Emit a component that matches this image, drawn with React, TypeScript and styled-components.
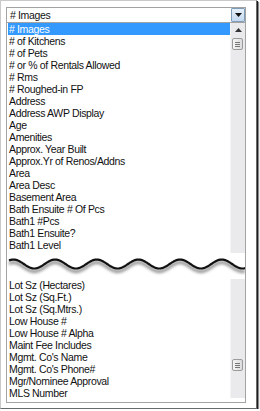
import React from 'react';
import styled, { createGlobalStyle } from 'styled-components';

const Global = createGlobalStyle`
  html, body { margin: 0; padding: 0; background: #fff; }
  body { font-family: "Liberation Sans", Arial, sans-serif; }
`;

const Frame = styled.div`
  box-sizing: border-box;
  width: 257px;
  height: 409px;
  border: 1px solid #c9c9c9;
  border-right-color: #6a6a6a;
  border-bottom-color: #6a6a6a;
  box-shadow: 1px 1px 0 #1c1c1c, 2px 2px 1px rgba(0, 0, 0, 0.45);
  background: #fff;
  padding: 6px 10px 0 5px;
  display: flex;
  flex-direction: column;
`;

const Combo = styled.div`
  box-sizing: border-box;
  height: 16px;
  border: 1px solid #a3a3a3;
  display: flex;
  align-items: center;
  font-size: 10.5px;
  letter-spacing: -0.35px;
  color: #111;
`;

const ComboText = styled.div`
  flex: 1;
  padding-left: 3px;
  line-height: 14px;
`;

const DropButton = styled.div`
  box-sizing: border-box;
  width: 14px;
  height: 14px;
  border: 1px solid #7f9db9;
  border-radius: 1px;
  background: linear-gradient(#e6f0fa, #c3d9f0);
  display: flex;
  align-items: center;
  justify-content: center;
`;

const ListBox = styled.div`
  box-sizing: border-box;
  height: 380px;
  border: 1px solid #a3a3a3;
  border-top: none;
  display: flex;
  flex-direction: column;
`;

const Part = styled.div<{ $h: number }>`
  height: ${(p) => p.$h}px;
  display: flex;
  flex-direction: row;
`;

const Rows = styled.div`
  flex: 1;
  display: flex;
  flex-direction: column;
  padding-left: 1px;
`;

const Row = styled.div<{ $sel?: boolean }>`
  height: 12px;
  line-height: 12px;
  font-size: 10.5px;
  letter-spacing: -0.35px;
  padding-left: 1px;
  white-space: nowrap;
  color: ${(p) => (p.$sel ? '#fff' : '#111')};
  background: ${(p) => (p.$sel ? '#3399ff' : 'transparent')};
`;

const Track = styled.div<{ $bottomGap: number }>`
  position: relative;
  width: 14px;
  background: #eaeaed;
  border-left: 1px solid #f4f4f6;
  margin-bottom: ${(p) => p.$bottomGap}px;
`;

const ArrowUp = styled.div`
  height: 14px;
  display: flex;
  align-items: center;
  justify-content: center;
`;

const Thumb = styled.div`
  position: absolute;
  left: 1px;
  width: 11px;
  height: 12px;
  box-sizing: border-box;
  border: 1px solid #9a9a9a;
  border-radius: 2px;
  background: linear-gradient(90deg, #f6f6f6, #dcdcdc);
  display: flex;
  flex-direction: column;
  align-items: center;
  justify-content: center;
  gap: 1px;
`;

const Grip = styled.div`
  width: 5px;
  height: 1px;
  background: #777;
`;

const Tear = styled.div`
  height: 26px;
  display: flex;
`;

const top = [
  '# Images',
  '# of Kitchens',
  '# of Pets',
  '# or % of Rentals Allowed',
  '# Rms',
  '# Roughed-in FP',
  'Address',
  'Address AWP Display',
  'Age',
  'Amenities',
  'Approx. Year Built',
  'Approx.Yr of Renos/Addns',
  'Area',
  'Area Desc',
  'Basement Area',
  'Bath Ensuite # Of Pcs',
  'Bath1 #Pcs',
  'Bath1 Ensuite?',
  'Bath1 Level',
];

const bottom = [
  'Lot Sz (Hectares)',
  'Lot Sz (Sq.Ft.)',
  'Lot Sz (Sq.Mtrs.)',
  'Low House #',
  'Low House # Alpha',
  'Maint Fee Includes',
  "Mgmt. Co's Name",
  "Mgmt. Co's Phone#",
  'Mgr/Nominee Approval',
  'MLS Number',
];

function wavePath(width: number, mid: number, amp: number, period: number, phase: number) {
  let d = '';
  for (let x = 0; x <= width; x += 1) {
    const y = mid - amp * Math.sin(((x - phase) / period) * Math.PI * 2);
    d += (x === 0 ? 'M' : 'L') + x + ' ' + y.toFixed(2) + ' ';
  }
  return d;
}

const Grips = () => (
  <>
    <Grip />
    <Grip />
    <Grip />
  </>
);

export default function App() {
  const d = wavePath(238, 11, 4.5, 42, 36);
  const ds = wavePath(238, 14, 4.5, 42, 36);
  return (
    <>
      <Global />
      <Frame>
        <Combo>
          <ComboText># Images</ComboText>
          <DropButton>
            <svg width="7" height="4" viewBox="0 0 7 4">
              <path d="M0 0 L7 0 L3.5 4 Z" fill="#111" />
            </svg>
          </DropButton>
        </Combo>
        <ListBox>
          <Part $h={230}>
            <Rows>
              {top.map((t, i) => (
                <Row key={t} $sel={i === 0}>
                  {t}
                </Row>
              ))}
            </Rows>
            <Track $bottomGap={0}>
              <ArrowUp>
                <svg width="7" height="4" viewBox="0 0 7 4">
                  <path d="M3.5 0 L7 4 L0 4 Z" fill="#333" />
                </svg>
              </ArrowUp>
              <Thumb style={{ top: 15 }}>
                <Grips />
              </Thumb>
            </Track>
          </Part>
          <Tear>
            <svg width="240" height="26" viewBox="0 0 240 26">
              <defs>
                <filter id="blur" x="-5%" y="-50%" width="110%" height="200%">
                  <feGaussianBlur stdDeviation="1.4" />
                </filter>
              </defs>
              <path d={ds} stroke="#8a8a8a" strokeWidth="3" fill="none" filter="url(#blur)" transform="translate(2 0)" />
              <path d={d} stroke="#111" strokeWidth="2.2" fill="none" transform="translate(2 0)" />
            </svg>
          </Tear>
          <Part $h={123}>
            <Rows>
              {bottom.map((t) => (
                <Row key={t}>{t}</Row>
              ))}
            </Rows>
            <Track $bottomGap={4}>
              <Thumb style={{ top: 80 }}>
                <Grips />
              </Thumb>
            </Track>
          </Part>
        </ListBox>
      </Frame>
    </>
  );
}
